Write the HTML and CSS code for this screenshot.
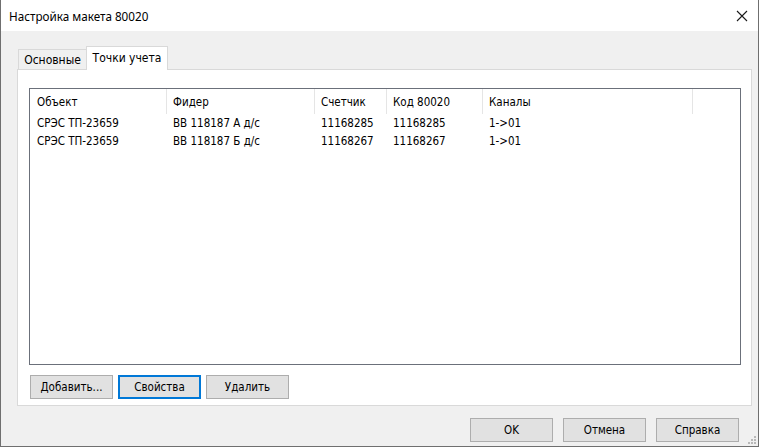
FILE: index.html
```html
<!DOCTYPE html>
<html lang="ru">
<head>
<meta charset="utf-8">
<title>Настройка макета 80020</title>
<link rel="stylesheet" href="styles.css">
</head>
<body>
<div class="window">
  <div class="titlebar">
    <span class="title">Настройка макета 80020</span>
    <svg class="close" width="12" height="12" viewBox="0 0 12 12"><path d="M1 1 L11 11 M11 1 L1 11" stroke="#1a1a1a" stroke-width="1.1" fill="none"/></svg>
  </div>
  <div class="client">
    <div class="tabstrip">
      <div class="tab">Основные</div>
      <div class="tab active">Точки учета</div>
    </div>
    <div class="panel">
      <div class="list">
        <div class="lrow header">
          <div class="hcell">Объект</div>
          <div class="hcell">Фидер</div>
          <div class="hcell">Счетчик</div>
          <div class="hcell">Код 80020</div>
          <div class="hcell">Каналы</div>
        </div>
        <div class="lrow item">
          <div class="cell">СРЭС ТП-23659</div>
          <div class="cell">ВВ 118187 А д/с</div>
          <div class="cell">11168285</div>
          <div class="cell">11168285</div>
          <div class="cell">1-&gt;01</div>
        </div>
        <div class="lrow item">
          <div class="cell">СРЭС ТП-23659</div>
          <div class="cell">ВВ 118187 Б д/с</div>
          <div class="cell">11168267</div>
          <div class="cell">11168267</div>
          <div class="cell">1-&gt;01</div>
        </div>
      </div>
      <div class="panelbuttons">
        <button class="btn">Добавить...</button>
        <button class="btn focused">Свойства</button>
        <button class="btn">Удалить</button>
      </div>
    </div>
    <div class="dialogbuttons">
      <button class="btn">OK</button>
      <button class="btn">Отмена</button>
      <button class="btn">Справка</button>
    </div>
    <svg class="grip" width="8" height="8" viewBox="0 0 8 8">
      <rect x="6" y="0" width="2" height="2" fill="#b8b8b8"/>
      <rect x="3" y="3" width="2" height="2" fill="#b8b8b8"/>
      <rect x="6" y="3" width="2" height="2" fill="#b8b8b8"/>
      <rect x="0" y="6" width="2" height="2" fill="#b8b8b8"/>
      <rect x="3" y="6" width="2" height="2" fill="#b8b8b8"/>
      <rect x="6" y="6" width="2" height="2" fill="#b8b8b8"/>
    </svg>
  </div>
</div>
</body>
</html>
```

FILE: styles.css
```css
html, body {
  margin: 0;
  padding: 0;
  background: #ffffff;
}
.window {
  width: 759px;
  height: 447px;
  box-sizing: border-box;
  border: 1px solid #6f6f6f;
  border-top: none;
  display: flex;
  flex-direction: column;
  font-family: "DejaVu Sans Condensed", "DejaVu Sans", sans-serif;
  font-size: 11.5px;
  color: #000;
}
.titlebar {
  height: 31px;
  flex: none;
  background: #ffffff;
  display: flex;
  align-items: center;
  padding: 0 10px 0 8px;
}
.title {
  font-family: "Noto Sans", sans-serif;
  font-size: 11.7px;
  flex: 1;
}
.close {
  flex: none;
}
.client {
  flex: 1;
  background: #f0f0f0;
  padding: 15px 6px 0 16px;
  display: flex;
  flex-direction: column;
  position: relative;
}
.tabstrip {
  height: 24px;
  margin-bottom: -1px;
  display: flex;
  align-items: flex-end;
  position: relative;
  z-index: 1;
  font-size: 12px;
}
.tab {
  box-sizing: border-box;
  height: 21px;
  width: 69px;
  margin-left: 1px;
  border: 1px solid #d9d9d9;
  background: #f0f0f0;
  display: flex;
  align-items: center;
  justify-content: center;
  padding-top: 1px;
}
.tab.active {
  height: 24px;
  width: 82px;
  margin-left: -1px;
  border-bottom: none;
  background: #ffffff;
  padding-top: 0;
  padding-bottom: 2px;
}
.panel {
  box-sizing: border-box;
  width: 735px;
  height: 337px;
  border: 1px solid #d9d9d9;
  background: #ffffff;
  padding: 18px 10px 0 11px;
  display: flex;
  flex-direction: column;
}
.list {
  box-sizing: border-box;
  height: 277px;
  border: 1px solid #6b707a;
  background: #fff;
}
.lrow {
  display: grid;
  grid-template-columns: 137px 148px 72px 96px 210px;
}
.header {
  height: 25px;
}
.hcell {
  border-right: 1px solid #e5e5e5;
  padding-left: 6px;
  display: flex;
  align-items: center;
  white-space: nowrap;
}
.hcell:first-child, .cell:first-child {
  padding-left: 7px;
}
.item {
  height: 18px;
}
.cell {
  padding-left: 6px;
  display: flex;
  align-items: center;
  white-space: nowrap;
}
.panelbuttons {
  display: flex;
  gap: 5px;
  margin-top: 10px;
  padding-left: 1px;
}
.btn {
  box-sizing: border-box;
  width: 83px;
  height: 24px;
  margin: 0;
  padding: 0;
  border: 1px solid #adadad;
  background: #e1e1e1;
  font-family: "DejaVu Sans Condensed", "DejaVu Sans", sans-serif;
  font-size: 11.5px;
  color: #000;
}
.btn.focused {
  border: 2px solid #0078d7;
}
.dialogbuttons {
  display: flex;
  justify-content: flex-end;
  gap: 10px;
  margin-top: 12px;
  padding-right: 13px;
}
.grip {
  position: absolute;
  right: 2px;
  bottom: 2px;
}
```
